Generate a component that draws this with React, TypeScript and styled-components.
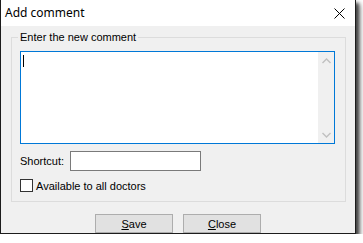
import React from "react";
import styled, { createGlobalStyle } from "styled-components";

const Global = createGlobalStyle`
  html, body { margin: 0; padding: 0; background: #ffffff; }
  body { font-family: "Liberation Sans", Arial, sans-serif; font-size: 11px; color: #000; }
`;

const Window = styled.div`
  box-sizing: border-box;
  width: 356px;
  height: 234px;
  border: 1px solid #1c1c1c;
  border-top: none;
  background: #f0f0f0;
  box-shadow: 3px 3px 3px rgba(0, 0, 0, 0.55), 4px 4px 6px rgba(0, 0, 0, 0.45);
  display: flex;
  flex-direction: column;
`;

const TitleBar = styled.div`
  height: 26px;
  background: #ffffff;
  display: flex;
  align-items: center;
  justify-content: space-between;
  padding: 0 10px 0 4px;
  flex-shrink: 0;
`;

const Title = styled.span`
  font-family: "Noto Sans", "Open Sans", sans-serif;
  font-size: 12px;
  color: #000;
  margin-top: -1px;
`;

const CloseIcon = styled.svg`
  width: 11px;
  height: 11px;
  display: block;
  margin-top: 1px;
`;

const Body = styled.div`
  flex: 1;
  display: flex;
  flex-direction: column;
  padding: 11px 0 0 10px;
`;

const GroupBox = styled.div`
  position: relative;
  box-sizing: border-box;
  width: 335px;
  height: 165px;
  border: 1px solid #dcdcdc;
  padding: 13px 0 0 8px;
  display: flex;
  flex-direction: column;
`;

const Legend = styled.span`
  position: absolute;
  top: -7px;
  left: 6px;
  padding: 0 2px;
  background: #f0f0f0;
  line-height: 13px;
`;

const TextBox = styled.div`
  box-sizing: border-box;
  width: 315px;
  height: 93px;
  border: 1px solid #0078d7;
  background: #ffffff;
  display: flex;
`;

const TextContent = styled.div`
  flex: 1;
  padding: 3px 0 0 2px;
`;

const Caret = styled.div`
  width: 1px;
  height: 12px;
  background: #000;
`;

const ScrollBar = styled.div`
  width: 16px;
  background: #f0f0f0;
  display: flex;
  flex-direction: column;
  justify-content: space-between;
  align-items: center;
  padding: 6px 0 5px;
`;

const Chevron = styled.svg`
  width: 9px;
  height: 6px;
  display: block;
`;

const FieldRow = styled.div`
  display: flex;
  align-items: center;
  margin-top: 7px;
  height: 20px;
`;

const FieldLabel = styled.span`
  width: 50px;
`;

const Input = styled.div`
  box-sizing: border-box;
  width: 131px;
  height: 20px;
  border: 1px solid #7a7a7a;
  background: #ffffff;
`;

const CheckRow = styled.div`
  display: flex;
  align-items: center;
  margin-top: 8px;
  gap: 3px;
`;

const CheckBox = styled.div`
  box-sizing: border-box;
  width: 13px;
  height: 13px;
  border: 1px solid #333333;
  background: #ffffff;
`;

const ButtonRow = styled.div`
  display: flex;
  justify-content: center;
  gap: 10px;
  margin: 12px 0 0 -10px;
`;

const Button = styled.div`
  box-sizing: border-box;
  width: 78px;
  height: 19px;
  background: #e1e1e1;
  border: 1px solid #adadad;
  display: flex;
  align-items: center;
  justify-content: center;
`;

const U = styled.span`
  text-decoration: underline;
`;

export default function App() {
  return (
    <>
      <Global />
      <Window>
        <TitleBar>
          <Title>Add comment</Title>
          <CloseIcon viewBox="0 0 11 11">
            <path d="M0.5 0.5 L10.5 10.5 M10.5 0.5 L0.5 10.5" stroke="#000" strokeWidth="1" />
          </CloseIcon>
        </TitleBar>
        <Body>
          <GroupBox>
            <Legend>Enter the new comment</Legend>
            <TextBox>
              <TextContent>
                <Caret />
              </TextContent>
              <ScrollBar>
                <Chevron viewBox="0 0 9 6">
                  <path d="M0.5 5 L4.5 1 L8.5 5" fill="none" stroke="#c0c0c0" strokeWidth="1.4" />
                </Chevron>
                <Chevron viewBox="0 0 9 6">
                  <path d="M0.5 1 L4.5 5 L8.5 1" fill="none" stroke="#c0c0c0" strokeWidth="1.4" />
                </Chevron>
              </ScrollBar>
            </TextBox>
            <FieldRow>
              <FieldLabel>Shortcut:</FieldLabel>
              <Input />
            </FieldRow>
            <CheckRow>
              <CheckBox />
              <span>Available to all doctors</span>
            </CheckRow>
          </GroupBox>
          <ButtonRow>
            <Button>
              <span><U>S</U>ave</span>
            </Button>
            <Button>
              <span><U>C</U>lose</span>
            </Button>
          </ButtonRow>
        </Body>
      </Window>
    </>
  );
}
